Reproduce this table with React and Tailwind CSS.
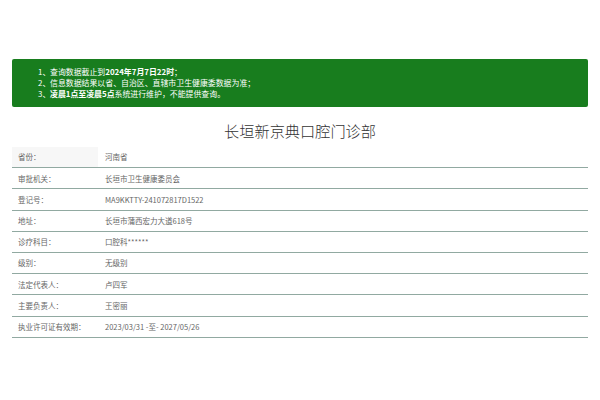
export default function App() {
  const rows = [
    ["省份：", "河南省"],
    ["审批机关：", "长垣市卫生健康委员会"],
    ["登记号：", "MA9KKTTY-241072817D1522"],
    ["地址：", "长垣市蒲西宏力大道618号"],
    ["诊疗科目：", "口腔科******"],
    ["级别：", "无级别"],
    ["法定代表人：", "卢四军"],
    ["主要负责人：", "王密丽"],
    ["执业许可证有效期：", "2023/03/31 -至- 2027/05/26"],
  ];
  return (
    <div
      className="w-[600px] h-[400px] bg-white pt-[59px] px-[12px]"
      style={{ fontFamily: '"Noto Sans CJK SC", "Noto Sans", sans-serif' }}
    >
      <div className="h-[48px] bg-[#187d1e] rounded-[2px] text-white text-[7.9px] leading-[10.8px] pl-[26px] pt-[8px]">
        <div className="flex">
          <span className="w-[12px]">1、</span>
          <span>查询数据截止到<b>2024年7月7日22时</b>；</span>
        </div>
        <div className="flex">
          <span className="w-[12px]">2、</span>
          <span>信息数据结果以省、自治区、直辖市卫生健康委数据为准；</span>
        </div>
        <div className="flex">
          <span className="w-[12px]">3、</span>
          <span><b>凌晨1点至凌晨5点</b>系统进行维护，不能提供查询。</span>
        </div>
      </div>
      <div className="mt-[13px] mb-[7px] h-[20px] leading-[20px] text-center text-[15.2px] font-light text-[#333]">
        长垣新京典口腔门诊部
      </div>
      <div className="text-[7.5px] text-[#666]">
        {rows.map(([k, v], i) => (
          <div key={i} className="flex h-[21.2px] border-b border-[#91a9a1] items-center">
            <div className={"w-[86px] h-full flex items-center pl-[6px] " + (i === 0 ? "bg-[#f7f7f7]" : "")}>{k}</div>
            <div className="pl-[7px]">{v}</div>
          </div>
        ))}
      </div>
    </div>
  );
}
